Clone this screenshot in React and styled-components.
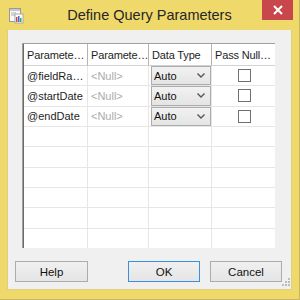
import React from 'react'
import styled, { createGlobalStyle } from 'styled-components'

const GlobalStyle = createGlobalStyle`
  html, body {
    margin: 0;
    padding: 0;
    background: #f0d96b;
  }
  body {
    font-family: "Liberation Sans", Arial, sans-serif;
  }
`

const Window = styled.div`
  position: relative;
  width: 300px;
  height: 300px;
  box-sizing: border-box;
  background: #f0d96b;
  border-right: 1px solid #c9b665;
  border-bottom: 1px solid #c9b665;
  display: flex;
  flex-direction: column;
  overflow: hidden;
`

const TitleBar = styled.div`
  height: 30px;
  display: grid;
  grid-template-columns: 1fr auto 1fr;
  align-items: start;
`

const TitleIcon = styled.div`
  margin: 8px 0 0 9px;
  width: 15px;
  height: 16px;
`

const Title = styled.div`
  padding-top: 7px;
  font-size: 14.5px;
  color: #262626;
`

const CloseButton = styled.div`
  justify-self: end;
  margin-right: 6px;
  width: 31px;
  height: 20px;
  background: #c7474d;
  display: flex;
  align-items: center;
  justify-content: center;
`

const Client = styled.div`
  position: relative;
  margin: 0 7px;
  height: 260px;
  box-sizing: border-box;
  background: #f0f0f0;
  border: 1px solid #e0cf80;
  border-top: none;
  padding: 13px 9px 7px 7px;
  display: flex;
  flex-direction: column;
`

const GridFrame = styled.div`
  height: 205px;
  margin: 0 7px;
  box-sizing: border-box;
  border-top: 1px solid #a0a0a0;
  border-left: 1px solid #a0a0a0;
  overflow: hidden;
`

const GridInner = styled.div`
  height: 100%;
  border-left: 1px solid #6a6a6a;
`

const Row = styled.div`
  display: grid;
  grid-template-columns: 64px 61px 63px 64px;
  height: ${p => (p.$header ? '22px' : '20.34px')};
`

const HeaderCell = styled.div`
  box-sizing: border-box;
  min-width: 0;
  background: #fff;
  border-right: 1px solid #b4b4b4;
  border-bottom: 1px solid #d2d2d2;
  padding: 0 0 0 3px;
  font-size: 11px;
  letter-spacing: -0.15px;
  color: #1e1e1e;
  display: flex;
  align-items: center;
  white-space: nowrap;
  overflow: hidden;
`

const Cell = styled.div`
  box-sizing: border-box;
  min-width: 0;
  background: #fff;
  border-right: 1px solid #e6e6e6;
  border-bottom: 1px solid #e6e6e6;
  padding: 0 2px 0 3px;
  font-size: 11px;
  color: ${p => (p.$muted ? '#ababab' : '#1e1e1e')};
  display: flex;
  align-items: center;
  justify-content: ${p => (p.$center ? 'center' : 'flex-start')};
  white-space: nowrap;
  overflow: hidden;
`

const ComboCell = styled(Cell)`
  padding: 0 0 0 2px;
  align-items: stretch;
`

const Combo = styled.div`
  flex: 1;
  box-sizing: border-box;
  border: 1px solid #acacac;
  background: linear-gradient(#f2f2f2, #e4e4e4);
  display: flex;
  align-items: center;
  justify-content: space-between;
  padding: 0 5px 0 2px;
  font-size: 11px;
  color: #111;
`

const CheckBox = styled.div`
  width: 13px;
  height: 13px;
  box-sizing: border-box;
  border: 1px solid #707070;
  background: #fff;
`

const ButtonRow = styled.div`
  margin-top: 13px;
  display: flex;
  gap: 10px;
`

const Button = styled.div`
  width: ${p => p.$width || 72}px;
  height: 21px;
  box-sizing: border-box;
  border: 1px solid ${p => (p.$default ? '#3c8ee0' : '#acacac')};
  background: linear-gradient(#f0f0f0, #e5e5e5);
  font-size: 11.5px;
  color: #111;
  display: flex;
  align-items: center;
  justify-content: center;
  margin-right: ${p => (p.$push ? 'auto' : '0')};
`

const Grip = styled.svg`
  position: absolute;
  right: 1px;
  bottom: 1px;
`

// names as the narrow column shows them
const params = ['@fieldRa…', '@startDate', '@endDate']
const headers = ['Paramete…', 'Paramete…', 'Data Type', 'Pass Null…']

function Chevron() {
  return (
    <svg width="8" height="5" viewBox="0 0 8 5">
      <path d="M0.5 0.5 L4 4 L7.5 0.5" fill="none" stroke="#555" strokeWidth="1.4" />
    </svg>
  )
}

function AppIcon() {
  return (
    <svg width="15" height="16" viewBox="0 0 15 16">
      <rect x="0.5" y="0.5" width="11" height="13" fill="#fafafa" stroke="#9a9a9a" />
      <rect x="1" y="1" width="10" height="2" fill="#c8c8c8" />
      <line x1="2" y1="5" x2="7" y2="5" stroke="#b0b0b0" />
      <line x1="2" y1="7" x2="6" y2="7" stroke="#b0b0b0" />
      <rect x="6" y="6" width="8" height="9" fill="#fff" stroke="#a8a8a8" />
      <rect x="7" y="9" width="1.5" height="5" fill="#d9434b" />
      <rect x="9" y="8" width="1.5" height="6" fill="#3b6fd0" />
      <rect x="11" y="10" width="1.5" height="4" fill="#4aa04a" />
    </svg>
  )
}

export default function App() {
  const blanks = Array.from({ length: 7 })
  return (
    <>
      <GlobalStyle />
      <Window>
        <TitleBar>
          <TitleIcon>
            <AppIcon />
          </TitleIcon>
          <Title>Define Query Parameters</Title>
          <CloseButton>
            <svg width="10" height="10" viewBox="0 0 10 10">
              <path d="M1 1 L9 9 M9 1 L1 9" stroke="#fff" strokeWidth="2" />
            </svg>
          </CloseButton>
        </TitleBar>
        <Client>
          <GridFrame>
            <GridInner>
              <Row $header>
                {headers.map((h, i) => (
                  <HeaderCell key={i}>{h}</HeaderCell>
                ))}
              </Row>
              {params.map(name => (
                <Row key={name}>
                  <Cell>{name}</Cell>
                  <Cell $muted>&lt;Null&gt;</Cell>
                  <ComboCell>
                    <Combo>
                      <span>Auto</span>
                      <Chevron />
                    </Combo>
                  </ComboCell>
                  <Cell $center>
                    <CheckBox />
                  </Cell>
                </Row>
              ))}
              {blanks.map((_, i) => (
                <Row key={i}>
                  <Cell />
                  <Cell />
                  <Cell />
                  <Cell />
                </Row>
              ))}
            </GridInner>
          </GridFrame>
          <ButtonRow>
            <Button $width={73} $push>Help</Button>
            <Button $default>OK</Button>
            <Button>Cancel</Button>
          </ButtonRow>
          <Grip width="10" height="10" viewBox="0 0 10 10">
            {[[8, 0], [8, 3], [5, 3], [8, 6], [5, 6], [2, 6]].map(([x, y]) => (
              <rect key={`${x}-${y}`} x={x} y={y} width="2" height="2" fill="#bdbdbd" />
            ))}
          </Grip>
        </Client>
      </Window>
    </>
  )
}
